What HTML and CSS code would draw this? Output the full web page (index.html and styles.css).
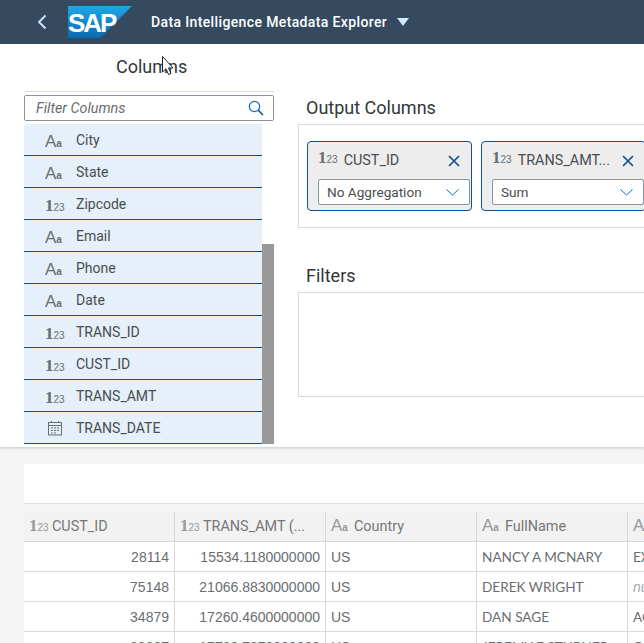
FILE: index.html
```html
<!DOCTYPE html>
<html>
<head>
  <title>Data Intelligence Metadata Explorer</title>
  <link rel="stylesheet" href="styles.css">
</head>
<body>
  <header class="shell">
    <svg class="back" width="12" height="16" viewBox="0 0 12 16"><path d="M9.5 1.5 3 8l6.500 6.500" fill="none" stroke="#d1e8ff" stroke-width="1.800"/></svg>
    <div class="logo">
      <svg width="64" height="32" viewBox="0 0 64 32">
        <defs>
          <linearGradient id="sapblue" x1="0" y1="0" x2="0" y2="1">
            <stop offset="0" stop-color="#1ea7e6"/>
            <stop offset="1" stop-color="#0a6ab0"/>
          </linearGradient>
        </defs>
        <path d="M0 0H64L32 32H0Z" fill="url(#sapblue)"/>
      </svg>
      <span class="logo-text">SAP</span>
    </div>
    <span class="shell-title">Data Intelligence Metadata Explorer</span>
    <svg class="shell-arrow" width="12" height="8" viewBox="0 0 12 8"><path d="M0 0H12L6 8Z" fill="#d1e8ff"/></svg>
  </header>

  <div class="top">
    <aside class="side">
      <h2 class="side-title">Columns</h2>
      <div class="side-rule"></div>
      <div class="search">
        <span>Filter Columns</span>
        <svg width="16" height="16" viewBox="0 0 16 16"><circle cx="6.500" cy="6.500" r="5.200" fill="none" stroke="#0a6ed1" stroke-width="1.200"/><path d="M10.300 10.300 15 15" stroke="#0a4f94" stroke-width="1.600"/></svg>
      </div>
      <div class="list-wrap">
        <ul class="list">
          <li><span class="ty"><b>A</b><i>a</i></span>City</li>
          <li><span class="ty"><b>A</b><i>a</i></span>State</li>
          <li><span class="ty num"><b>1</b><i>23</i></span>Zipcode</li>
          <li><span class="ty"><b>A</b><i>a</i></span>Email</li>
          <li><span class="ty"><b>A</b><i>a</i></span>Phone</li>
          <li><span class="ty"><b>A</b><i>a</i></span>Date</li>
          <li><span class="ty num"><b>1</b><i>23</i></span>TRANS_ID</li>
          <li><span class="ty num"><b>1</b><i>23</i></span>CUST_ID</li>
          <li><span class="ty num"><b>1</b><i>23</i></span>TRANS_AMT</li>
          <li>
            <span class="ty cal">
              <svg width="16" height="16" viewBox="0 0 16 16" fill="none" stroke="#6a6d70"><rect x="1.500" y="2.500" width="13" height="12.500"/><path d="M1.500 5.500h13M4.500 1v2M11.500 1v2"/><path d="M4 8h2M7 8h2M10 8h2M4 10.500h2M7 10.500h2M10 10.500h2M4 13h2M7 13h2" stroke-width="1.200"/></svg>
            </span>TRANS_DATE
          </li>
        </ul>
        <div class="scroll"><div class="thumb"></div></div>
      </div>
    </aside>

    <section class="main">
      <h2 class="sec-title">Output Columns</h2>
      <div class="box output">
        <div class="card">
          <div class="card-head">
            <span class="ty num"><b>1</b><i>23</i></span>
            <span class="card-name">CUST_ID</span>
            <svg class="x" width="12" height="12" viewBox="0 0 12 12"><path d="M1 1 11 11M11 1 1 11" stroke="#0a5396" stroke-width="1.700"/></svg>
          </div>
          <div class="pick">
            <span>No Aggregation</span>
            <svg width="13" height="7" viewBox="0 0 13 7"><path d="M.5.5l6 5.500 6-5.500" fill="none" stroke="#0a6ed1"/></svg>
          </div>
        </div>
        <div class="card">
          <div class="card-head">
            <span class="ty num"><b>1</b><i>23</i></span>
            <span class="card-name">TRANS_AMT...</span>
            <svg class="x" width="12" height="12" viewBox="0 0 12 12"><path d="M1 1 11 11M11 1 1 11" stroke="#0a5396" stroke-width="1.700"/></svg>
          </div>
          <div class="pick">
            <span>Sum</span>
            <svg width="13" height="7" viewBox="0 0 13 7"><path d="M.5.5l6 5.500 6-5.500" fill="none" stroke="#0a6ed1"/></svg>
          </div>
        </div>
      </div>
      <h2 class="sec-title filters-title">Filters</h2>
      <div class="box filters"></div>
    </section>
  </div>

  <div class="bottom">
    <div class="toolbar"></div>
    <div class="grid">
      <div class="hd"><span class="ty num"><b>1</b><i>23</i></span>CUST_ID</div>
      <div class="hd"><span class="ty num"><b>1</b><i>23</i></span>TRANS_AMT (...</div>
      <div class="hd"><span class="ty"><b>A</b><i>a</i></span>Country</div>
      <div class="hd"><span class="ty"><b>A</b><i>a</i></span>FullName</div>
      <div class="hd"><span class="ty"><b>A</b><i>a</i></span>Address</div>

      <div class="td right">28114</div>
      <div class="td right">15534.1180000000</div>
      <div class="td">US</div>
      <div class="td name">NANCY A MCNARY</div>
      <div class="td name">EXECUTIVE</div>

      <div class="td right">75148</div>
      <div class="td right">21066.8830000000</div>
      <div class="td">US</div>
      <div class="td name">DEREK WRIGHT</div>
      <div class="td null">null</div>

      <div class="td right">34879</div>
      <div class="td right">17260.4600000000</div>
      <div class="td">US</div>
      <div class="td name">DAN SAGE</div>
      <div class="td name">ACCOUNT</div>

      <div class="td right">33337</div>
      <div class="td right">17730.7370000000</div>
      <div class="td">US</div>
      <div class="td name">JEREMY E STUBNER</div>
      <div class="td name">C</div>
    </div>
  </div>

  <svg class="cursor" width="14" height="20" viewBox="0 0 14 20"><path d="M.5.5V16l3.500-3.200L6.500 18.500l2.500-1-2.500-5.500H11Z" fill="#fff" stroke="#222"/></svg>
</body>
</html>
```

FILE: styles.css
```css
* {
  box-sizing: border-box;
}

html, body {
  height: 100%;
}

body {
  margin: 0;
  position: relative;
  overflow: hidden;
  display: flex;
  flex-direction: column;
  font-family: Roboto, Arial, sans-serif;
  color: #32363a;
  background: #fff;
}

.shell {
  flex: none;
  height: 44px;
  background: #354a5f;
  display: flex;
  align-items: center;
  padding-left: 36px;
}

.back {
  margin-right: 20px;
}

.logo {
  position: relative;
  width: 64px;
  height: 32px;
  margin-right: 19px;
}

.logo svg {
  display: block;
}

.logo-text {
  position: absolute;
  left: 0;
  top: 4px;
  font: bold 26px/26px "Liberation Sans", sans-serif;
  letter-spacing: -2px;
  color: #fff;
}

.shell-title {
  font-size: 14px;
  font-weight: 500;
  letter-spacing: .37px;
  color: #fff;
  margin-right: 10px;
}

.top {
  flex: none;
  height: 403px;
  display: flex;
  padding-left: 24px;
  box-shadow: 0 1px 3px rgba(0, 0, 0, .2);
  position: relative;
}

.side {
  width: 250px;
  flex: none;
}

.side-title {
  margin: 0;
  height: 47px;
  padding: 12px 0 0 92px;
  font-size: 18px;
  font-weight: 400;
  line-height: 22px;
}

.side-rule {
  height: 1px;
  background: #d9d9d9;
  margin-bottom: 3px;
}

.search {
  height: 26px;
  border: 1px solid #89919a;
  border-radius: 2px;
  display: flex;
  align-items: center;
  justify-content: space-between;
  padding: 0 9px 0 11px;
  font-size: 14.300px;
  font-style: italic;
  color: #6a6d70;
  margin-bottom: 3px;
}

.list-wrap {
  display: flex;
}

.list {
  list-style: none;
  margin: 0;
  padding: 0;
  width: 238px;
}

.list li {
  height: 32px;
  background: #e5f0fa;
  border-bottom: 1px solid #0a5396;
  display: flex;
  align-items: center;
  padding-left: 21px;
  font-size: 14px;
  color: #4a4d50;
}

.list .ty {
  width: 31px;
  margin-top: 6px;
}

.list .cal {
  margin: 0;
  padding-left: 2px;
}

.cal svg {
  display: block;
}

.scroll {
  width: 12px;
  padding-top: 120px;
}

.thumb {
  height: 200px;
  background: #999;
}

/* type glyph: big letter plus small suffix */
.ty {
  display: inline-flex;
  align-items: baseline;
  flex: none;
  color: #6a6d70;
}

.ty b {
  font: 400 17px/16px "Liberation Sans", sans-serif;
}

.ty i {
  font: 700 10px/16px "Liberation Sans", sans-serif;
}

.ty.num b {
  font: 700 17px/16px "Liberation Serif", serif;
}

.ty.num i {
  font: 400 10px/16px "Liberation Sans", sans-serif;
}

.main {
  flex: 1;
  min-width: 0;
  padding-left: 24px;
}

.sec-title {
  margin: 53px 0 0;
  padding-left: 8px;
  height: 27px;
  font-size: 18px;
  font-weight: 400;
  line-height: 22px;
}

.filters-title {
  margin-top: 37px;
}

.box {
  border: 1px solid #d9d9d9;
  border-right: 0;
}

.output {
  height: 104px;
  display: flex;
  gap: 9px;
  padding: 16px 0 0 8px;
  overflow: hidden;
}

.card {
  flex: none;
  width: 165px;
  height: 70px;
  background: #ededed;
  border: 1px solid #0a5396;
  border-radius: 4px;
  padding: 0 1px 0 10px;
}

.card-head {
  height: 37px;
  display: flex;
  align-items: center;
  font-size: 14.400px;
  color: #4a4d50;
}

.card-head .ty {
  margin-right: 6px;
  margin-top: -4px;
}

.card-name {
  flex: 1;
}

.x {
  margin-right: 10px;
}

.pick {
  height: 26px;
  background: #fff;
  border: 1px solid #89919a;
  border-radius: 2px;
  display: flex;
  align-items: center;
  justify-content: space-between;
  padding: 0 10px 0 8px;
  font-size: 13.600px;
  color: #4a4d50;
}

.filters {
  height: 105px;
}

.bottom {
  flex: 1;
  min-height: 0;
  background: #f5f5f5;
  padding: 17px 0 0 24px;
  overflow: hidden;
}

.toolbar {
  height: 40px;
  background: #fff;
  border-bottom: 1px solid #ddd;
  margin-bottom: 8px;
}

.grid {
  display: grid;
  grid-template-columns: repeat(5, 151px);
  grid-auto-rows: 30px;
  width: 755px;
  background: #fff;
}

.hd, .td {
  border-right: 1px solid #d9d9d9;
  border-bottom: 1px solid #d9d9d9;
  display: flex;
  align-items: center;
  padding: 0 5px;
  font: 14px "Liberation Sans", sans-serif;
  color: #6a6d70;
  white-space: nowrap;
  overflow: hidden;
}

.hd {
  background: #f2f2f2;
  color: #777;
  font-family: Roboto, sans-serif;
  font-size: 14.400px;
}

.hd .ty {
  width: 23px;
  color: #999;
}

.right {
  justify-content: flex-end;
}

.name {
  font-family: Lato, sans-serif;
  font-size: 13.600px;
}

.null {
  font-style: italic;
  color: #aaa;
}

.cursor {
  position: absolute;
  left: 162px;
  top: 56px;
}
```
